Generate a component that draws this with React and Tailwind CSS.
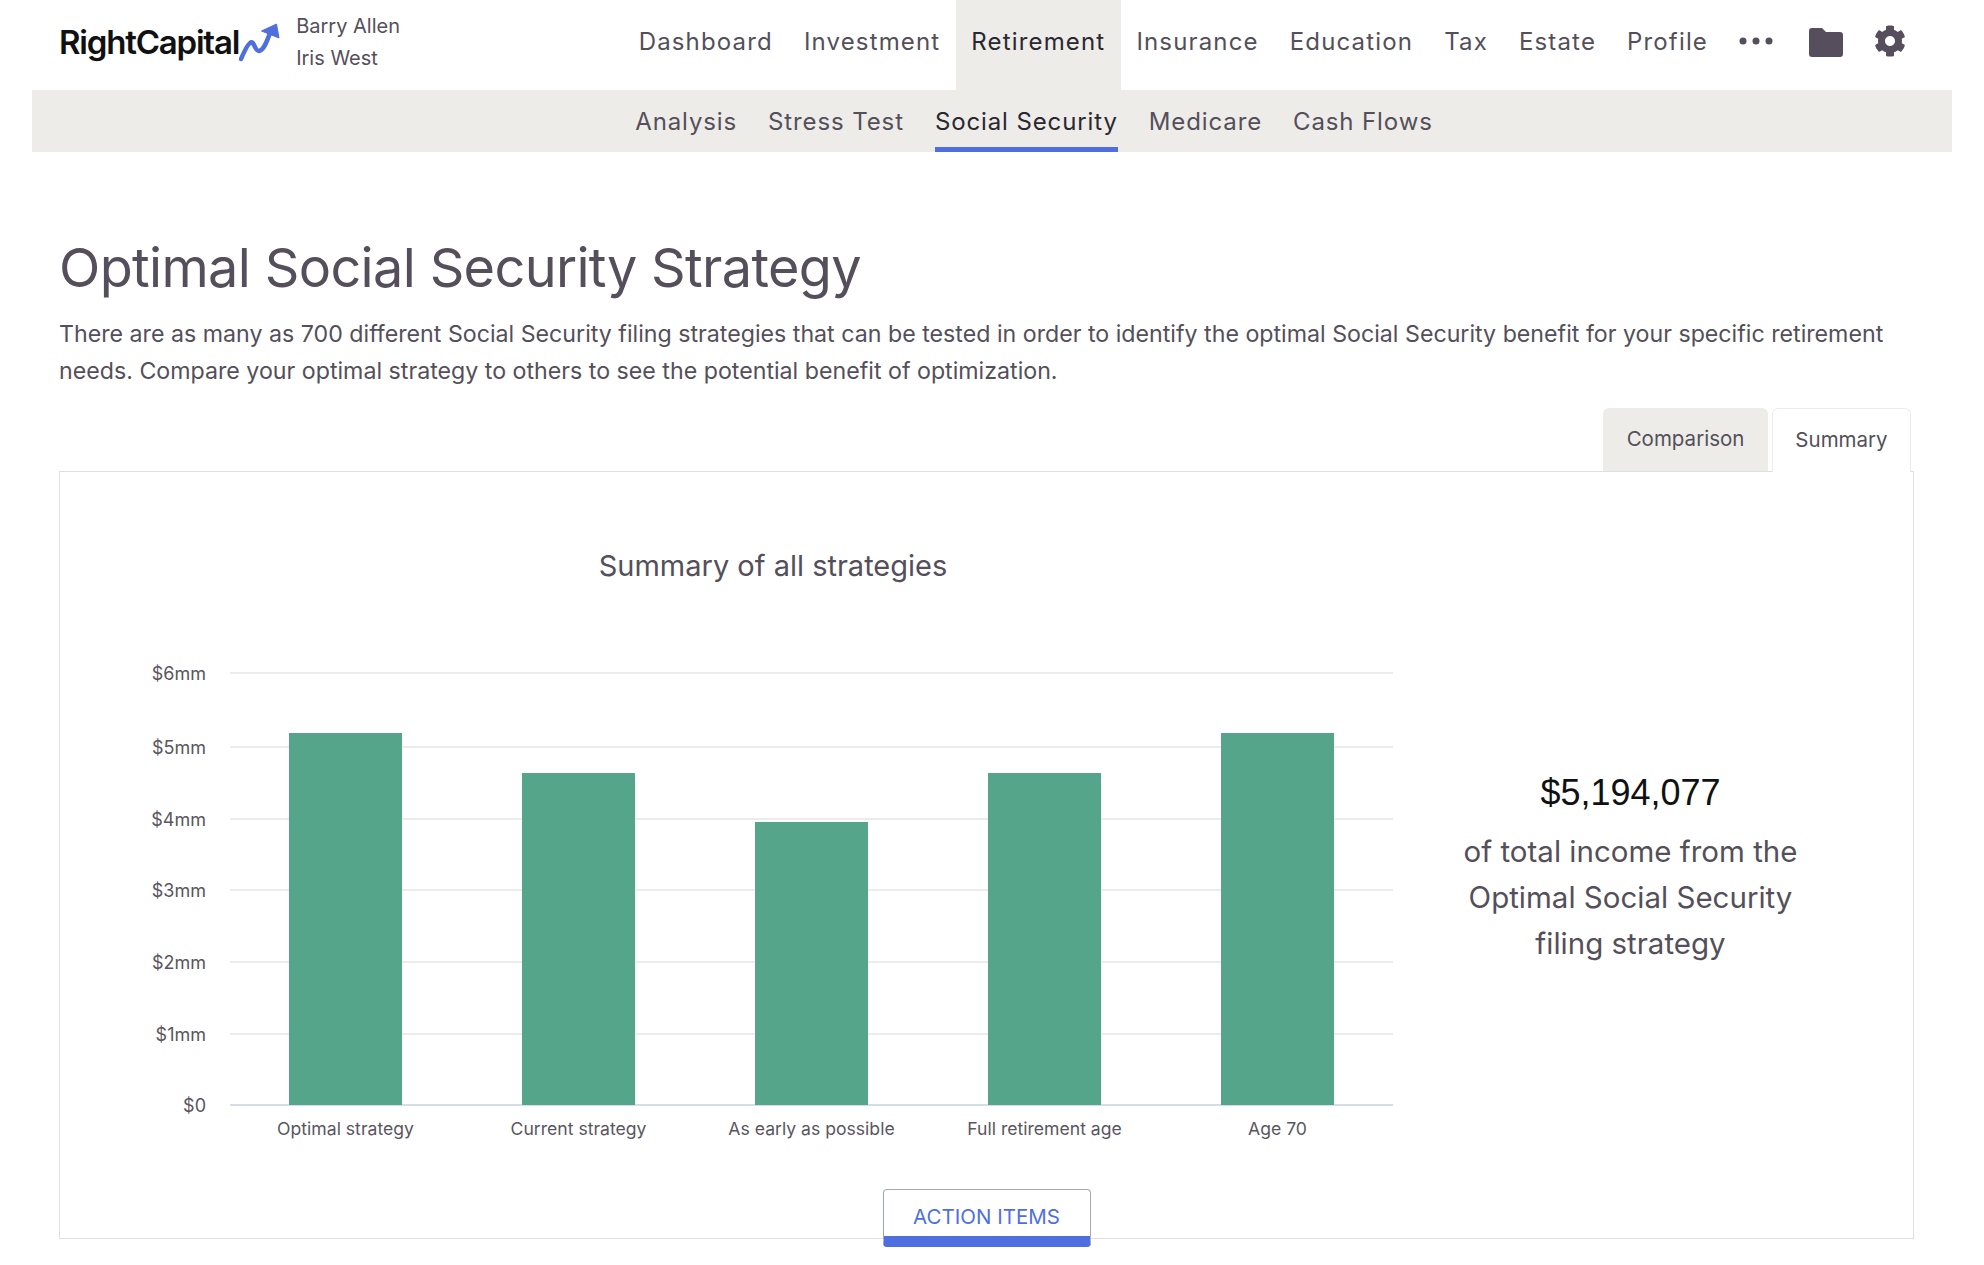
import { FaCog } from 'react-icons/fa'

const mainNav = ['Dashboard', 'Investment', 'Retirement', 'Insurance', 'Education', 'Tax', 'Estate', 'Profile']
const subNav = ['Analysis', 'Stress Test', 'Social Security', 'Medicare', 'Cash Flows']
const yTicks = [
  { label: '$0', y: 1105 },
  { label: '$1mm', y: 1034 },
  { label: '$2mm', y: 962 },
  { label: '$3mm', y: 890 },
  { label: '$4mm', y: 819 },
  { label: '$5mm', y: 747 },
  { label: '$6mm', y: 673 },
]
const bars = [
  { label: 'Optimal strategy', top: 733 },
  { label: 'Current strategy', top: 773 },
  { label: 'As early as possible', top: 822 },
  { label: 'Full retirement age', top: 773 },
  { label: 'Age 70', top: 733 },
]

function Logo() {
  return (
    <div className="flex items-center -mt-[4px]">
      <span className="text-[33px] font-semibold tracking-[-1.2px] text-[#111]">RightCapital</span>
      <svg width="42" height="42" viewBox="0 0 42 42" fill="none" className="-mt-[2px]">
        <path
          d="M2 38 C5 31 8 24 11 22 C15 18 16 31 20 30 C25 29 28 20 31 12"
          stroke="#4f6fdf"
          strokeWidth="4.5"
          strokeLinecap="round"
        />
        <path d="M22.5 10 L37.5 3 L40 17 Z" fill="#4f6fdf" stroke="#4f6fdf" strokeLinejoin="round" />
      </svg>
    </div>
  )
}

function Folder() {
  return (
    <svg width="34" height="29" viewBox="0 0 34 29" fill="#564e5c" className="ml-[36px] -mt-[6px]">
      <path d="M3 0 H13 L17 4 H31 A3 3 0 0 1 34 7 V26 A3 3 0 0 1 31 29 H3 A3 3 0 0 1 0 26 V3 A3 3 0 0 1 3 0 Z" />
    </svg>
  )
}

function Chart() {
  return (
    <svg width="1320" height="520" viewBox="100 640 1320 520" className="block" style={{ fontFamily: 'Inter, sans-serif' }}>
      {yTicks.map((t, i) => (
        <g key={t.label}>
          <line x1="230" x2="1393" y1={t.y} y2={t.y} stroke={i === 0 ? '#d5dde8' : '#ececec'} strokeWidth="2" />
          <text x="206" y={t.y + 7} textAnchor="end" fontSize="18" fill="#5a5560">
            {t.label}
          </text>
        </g>
      ))}
      {bars.map((b, i) => {
        const x = 289 + i * 233
        return (
          <g key={b.label}>
            <rect x={x} y={b.top} width="113" height={1105 - b.top} fill="#55a58a" />
            <text x={x + 56.5} y="1135" textAnchor="middle" fontSize="17.6" fill="#5a5560">
              {b.label}
            </text>
          </g>
        )
      })}
    </svg>
  )
}

export default function App() {
  return (
    <div className="w-[1984px] h-[1265px] overflow-hidden bg-white text-[#544f5b]" style={{ fontFamily: 'Inter, sans-serif' }}>
      {/* Top nav */}
      <div className="h-[90px] flex items-center pl-[59px]">
        <Logo />
        <div className="ml-[15px] text-[20px] leading-[32px] -mt-[7px] w-[120px]">
          <div>Barry Allen</div>
          <div>Iris West</div>
        </div>
        <div className="ml-[207px] flex h-full items-center text-[24px] tracking-[1.16px]">
          {mainNav.map((n) => (
            <div
              key={n}
              className={
                n === 'Retirement'
                  ? 'h-full flex items-center px-[15.5px] pb-[6px] bg-[#edece8] text-[#2b2730]'
                  : 'h-full flex items-center px-[15.5px] pb-[6px]'
              }
            >
              {n}
            </div>
          ))}
          <svg width="34" height="8" viewBox="0 0 34 8" className="ml-[15px] -mt-[8px]" fill="#544f5b">
            <circle cx="4" cy="4" r="3.5" />
            <circle cx="17" cy="4" r="3.5" />
            <circle cx="30" cy="4" r="3.5" />
          </svg>
          <Folder />
          <FaCog className="ml-[31px] -mt-[8px] w-[32px] h-[32px] text-[#564e5c]" />
        </div>
      </div>

      {/* Sub nav */}
      <div className="mx-[32px] h-[62px] bg-[#edece8] flex justify-center pl-[84px] text-[24px] tracking-[0.88px]">
        <div className="flex gap-[31px]">
          {subNav.map((n) => (
            <div
              key={n}
              className={
                n === 'Social Security'
                  ? 'flex items-center border-b-[5px] border-[#4f6fdf] pt-[7px] text-[#2b2730]'
                  : 'flex items-center border-b-[5px] border-transparent pt-[7px]'
              }
            >
              {n}
            </div>
          ))}
        </div>
      </div>

      {/* Page content */}
      <div className="pl-[59px] pr-[70px]">
        <h1 className="mt-[83px] text-[54px] leading-[66px] font-normal tracking-[-0.66px]">Optimal Social Security Strategy</h1>
        <p className="mt-[15px] text-[23.2px] leading-[37px]">
          There are as many as 700 different Social Security filing strategies that can be tested in order to identify the optimal Social Security benefit for your specific retirement needs. Compare your optimal strategy to others to see the potential benefit of optimization.
        </p>

        <div className="mt-[18px] flex justify-end gap-[4px] pr-[3px] text-[20.5px]">
          <div className="w-[165px] h-[63px] rounded-t-[6px] bg-[#edece8] flex items-center justify-center">Comparison</div>
          <div className="w-[139px] h-[64px] -mb-px relative z-10 rounded-t-[6px] border border-b-0 border-[#ececec] bg-white flex items-center justify-center">Summary</div>
        </div>

        <div className="h-[768px] border border-[#dfdfdf] flex flex-col">
          <div className="flex flex-1">
            <div className="w-[1320px]">
              <div className="pt-[76px] text-center text-[29px] leading-[36px] w-[1426px]">Summary of all strategies</div>
              <div className="mt-[56px] ml-[40px]">
                <Chart />
              </div>
            </div>
            <div className="flex-1 flex flex-col items-center pt-[298px] -ml-[32px]">
              <div className="text-[36px] leading-[46px] text-[#111]" style={{ fontFamily: '"Liberation Sans", sans-serif' }}>
                $5,194,077
              </div>
              <div className="mt-[12px] text-[29.5px] leading-[46px] text-center">
                of total income from the
                <br />
                Optimal Social Security
                <br />
                filing strategy
              </div>
            </div>
          </div>
          <div className="flex justify-center -mb-[9px]">
            <button className="w-[208px] h-[58px] pt-[9px] rounded-[4px] border border-[#a9a9a9] border-b-[11px] border-b-[#4f6fdf] border-l-[#8fa4e8] bg-white text-[20.5px] text-[#4f6fdf]">
              ACTION ITEMS
            </button>
          </div>
        </div>
      </div>
    </div>
  )
}
